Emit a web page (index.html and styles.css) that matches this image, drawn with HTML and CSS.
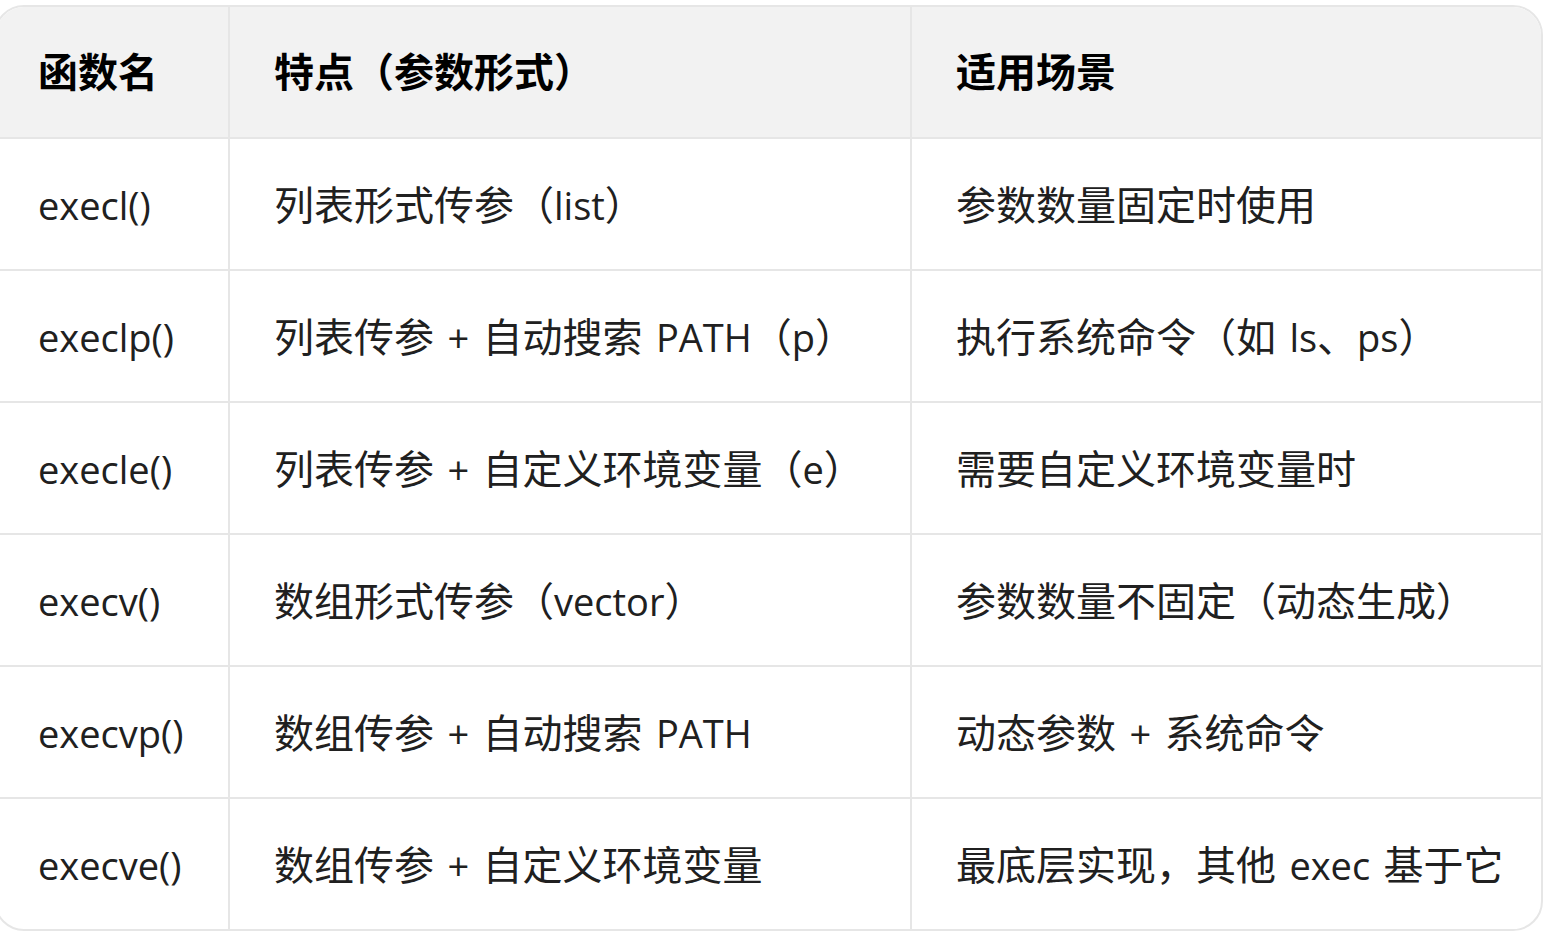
FILE: index.html
```html
<!DOCTYPE html>
<html lang="zh-CN">
<head>
<meta charset="utf-8">
<title>exec 函数族</title>
<link rel="stylesheet" href="styles.css">
</head>
<body>
<div class="wrap">
<table class="tbl">
  <colgroup>
    <col class="c1">
    <col class="c2">
    <col class="c3">
  </colgroup>
  <thead>
    <tr><th>函数名</th><th>特点（参数形式）</th><th>适用场景</th></tr>
  </thead>
  <tbody>
    <tr><td><span class="en">execl()</span></td><td>列表形式传参（<span class="en">list</span>）</td><td>参数数量固定时使用</td></tr>
    <tr><td><span class="en">execlp()</span></td><td>列表传参 <span class="en">+</span> 自动搜索 <span class="en">PATH</span>（<span class="en">p</span>）</td><td>执行系统命令（如 <span class="en">ls</span>、<span class="en">ps</span>）</td></tr>
    <tr><td><span class="en">execle()</span></td><td>列表传参 <span class="en">+</span> 自定义环境变量（<span class="en">e</span>）</td><td>需要自定义环境变量时</td></tr>
    <tr><td><span class="en">execv()</span></td><td>数组形式传参（<span class="en">vector</span>）</td><td>参数数量不固定（动态生成）</td></tr>
    <tr><td><span class="en">execvp()</span></td><td>数组传参 <span class="en">+</span> 自动搜索 <span class="en">PATH</span></td><td>动态参数 <span class="en">+</span> 系统命令</td></tr>
    <tr><td><span class="en">execve()</span></td><td>数组传参 <span class="en">+</span> 自定义环境变量</td><td>最底层实现，其他 <span class="en">exec</span> 基于它</td></tr>
  </tbody>
</table>
</div>
</body>
</html>
```
FILE: styles.css
```css
html, body {
  margin: 0;
  padding: 0;
  background: #ffffff;
}
body {
  font-family: "Open Sans", "Noto Sans CJK SC", sans-serif;
  color: #202020;
  overflow: hidden;
}
.wrap {
  padding-top: 5px;
  margin-left: -6px;
  width: 1549px;
}
.tbl {
  width: 1549px;
  table-layout: fixed;
  border-collapse: separate;
  border-spacing: 0;
  border: 2px solid #e6e6e6;
  border-radius: 30px;
  overflow: hidden;
}
.c1 { width: 234px; }
.c2 { width: 682px; }
.c3 { width: 629px; }
.tbl th,
.tbl td {
  height: 130px;
  padding: 0 0 0 44px;
  text-align: left;
  vertical-align: middle;
  font-size: 40px;
  line-height: 1.3;
  white-space: nowrap;
  word-spacing: 3px;
  border-right: 2px solid #e6e6e6;
  border-bottom: 2px solid #e6e6e6;
}
.tbl td {
  height: 128px;
  padding-top: 2px;
}
.tbl th:first-child,
.tbl td:first-child {
  padding-left: 42px;
}
.tbl th {
  background: #f2f2f2;
  color: #000;
  font-weight: 700;
}
.en {
  font-size: 38px;
}
.tbl th:last-child,
.tbl td:last-child {
  border-right: none;
}
.tbl tbody tr:last-child td {
  border-bottom: none;
}
```
